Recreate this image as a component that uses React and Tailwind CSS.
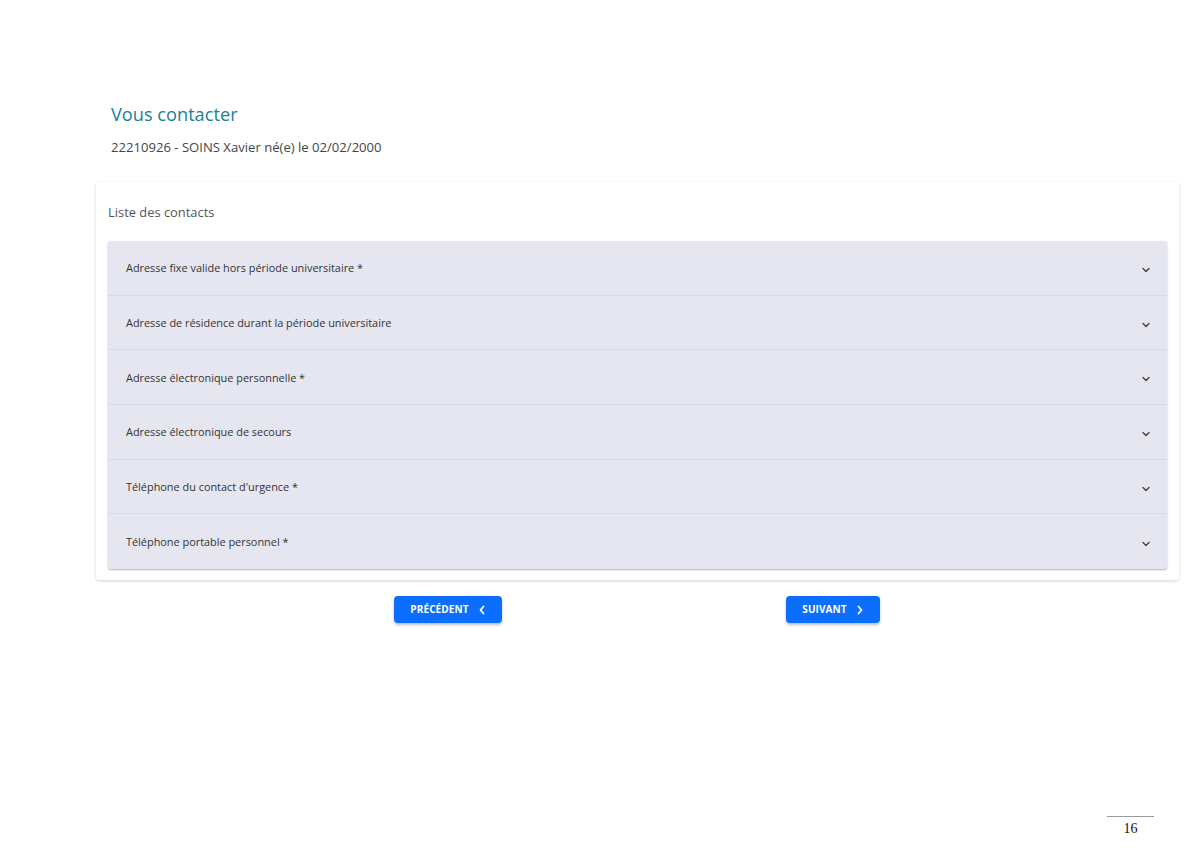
import React from "react";

const rows = [
  "Adresse fixe valide hors période universitaire *",
  "Adresse de résidence durant la période universitaire",
  "Adresse électronique personnelle *",
  "Adresse électronique de secours",
  "Téléphone du contact d'urgence *",
  "Téléphone portable personnel *",
];

function Chevron() {
  return (
    <svg width="10" height="10" viewBox="0 0 10 10" fill="none" className="mt-[4px]">
      <path d="M2 3.5 L5 6.5 L8 3.5" stroke="#444" strokeWidth="1.4" strokeLinecap="round" strokeLinejoin="round" />
    </svg>
  );
}

export default function App() {
  return (
    <div className="w-[1200px] h-[848px] bg-white relative" style={{ fontFamily: '"Open Sans", "Noto Sans", sans-serif' }}>
      <div className="pt-[102px] pl-[111px]">
        <h1 className="text-[18.2px] leading-[24px] text-[#1b7f96]">Vous contacter</h1>
        <p className="mt-[12px] text-[13.1px] leading-[19px] text-[#454545]">22210926 - SOINS Xavier né(e) le 02/02/2000</p>
      </div>
      <div className="ml-[96px] mt-[25px] w-[1083px] bg-white rounded-[3px] shadow-[0_1px_3px_rgba(0,0,0,0.18)] px-[12px] pt-[21px] pb-[11px]">
        <div className="text-[12.9px] leading-[18px] text-[#555] pb-[20px]">Liste des contacts</div>
        <div className="rounded-[3px] bg-[#e6e6f1] shadow-[0_1px_2px_rgba(0,0,0,0.3)]">
          {rows.map((r, i) => (
            <div
              key={i}
              className={`h-[54.7px] flex items-center justify-between pl-[18px] pr-[16px] ${i < rows.length - 1 ? "border-b border-[#d9d9e6]" : ""}`}
            >
              <span className="text-[10.9px] text-[#333] mt-[1px]">{r}</span>
              <Chevron />
            </div>
          ))}
        </div>
      </div>
      <div className="flex mt-[16px] pl-[394px] gap-[284px]">
        <button className="h-[27px] w-[108px] rounded-[4px] bg-[#0b6efd] text-white text-[10px] font-bold tracking-[0.1px] flex items-center justify-center gap-[9px] shadow-[0_2px_3px_rgba(0,0,0,0.25)]">
          PRÉCÉDENT
          <svg width="8" height="10" viewBox="0 0 8 10" fill="none"><path d="M5.5 1.5 L2.5 5 L5.5 8.5" stroke="white" strokeWidth="1.8" strokeLinecap="round" strokeLinejoin="round" /></svg>
        </button>
        <button className="h-[27px] w-[94px] rounded-[4px] bg-[#0b6efd] text-white text-[10px] font-bold tracking-[0.1px] flex items-center justify-center gap-[9px] shadow-[0_2px_3px_rgba(0,0,0,0.25)]">
          SUIVANT
          <svg width="8" height="10" viewBox="0 0 8 10" fill="none"><path d="M2.5 1.5 L5.5 5 L2.5 8.5" stroke="white" strokeWidth="1.8" strokeLinecap="round" strokeLinejoin="round" /></svg>
        </button>
      </div>
      <div className="absolute left-[1107px] top-[816px] w-[47px] border-t border-[#999]"></div>
      <div className="absolute left-[1107px] top-[818px] w-[47px] text-center text-[14px] text-[#111]" style={{ fontFamily: '"Liberation Serif", serif' }}>16</div>
    </div>
  );
}
